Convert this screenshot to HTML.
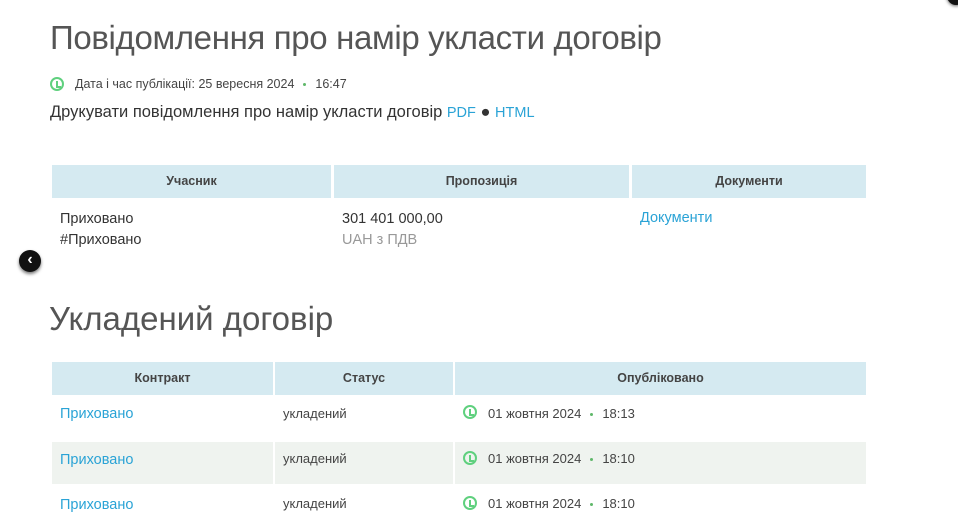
<!DOCTYPE html>
<html><head><meta charset="utf-8"><style>
*{margin:0;padding:0;box-sizing:border-box}
body{width:958px;height:522px;overflow:hidden;background:#fff;font-family:"Liberation Sans",sans-serif;color:#333;position:relative}
.a{position:absolute;white-space:nowrap}
h1{position:absolute;left:50px;top:19px;font-weight:300;font-size:33px;color:#555;letter-spacing:-0.35px;font-family:"Liberation Sans",sans-serif}
.lnk{color:#2aa3d6}
.hd{position:absolute;background:#d5eaf1;font-size:12.5px;font-weight:bold;color:#444;text-align:center;line-height:33px;font-family:"Liberation Sans Narrow","Liberation Sans",sans-serif}
.clock{display:inline-block;width:14px;height:14px;border:2px solid #5fd07e;border-radius:50%;position:absolute}
.clock:after{content:"";position:absolute;left:4px;top:1.5px;width:3px;height:5px;border-left:2px solid #5fd07e;border-bottom:2px solid #5fd07e}
.dot{display:inline-block;width:3px;height:3px;background:#5fb86a;border-radius:50%;vertical-align:middle;margin:0 9px}
.sm{font-family:"Liberation Sans Narrow","Liberation Sans",sans-serif;font-size:13px;color:#444}
</style></head><body>
<div class="a" style="left:947px;top:-13px;width:18px;height:18px;border-radius:50%;background:#111;box-shadow:0 1px 3px #666"></div>
<h1>Повідомлення про намір укласти договір</h1>
<span class="clock" style="left:50px;top:77px"></span>
<div class="a sm" style="left:75px;top:77px;font-size:12.5px">Дата і час публікації: 25 вересня 2024<span class="dot"></span>16:47</div>
<div class="a" style="left:50px;top:103px;font-size:16.5px;color:#333">Друкувати повідомлення про намір укласти договір <span class="lnk" style="font-size:14.5px">PDF</span> ● <span class="lnk" style="font-size:14.5px">HTML</span></div>

<div class="hd" style="left:52px;top:165px;width:279px">Учасник</div>
<div class="hd" style="left:334px;top:165px;width:295px">Пропозиція</div>
<div class="hd" style="left:632px;top:165px;width:234px">Документи</div>
<div class="a" style="left:60px;top:209px;font-size:14.5px;line-height:21px">Приховано<br>#Приховано</div>
<div class="a" style="left:342px;top:209px;font-size:14.5px;line-height:21px">301 401 000,00<br><span style="color:#999">UAH з ПДВ</span></div>
<div class="a lnk" style="left:640px;top:210px;font-size:14.5px">Документи</div>
<div class="a" style="left:19px;top:250px;width:22px;height:22px;border-radius:50%;background:#111;box-shadow:0 2px 3px #777;color:#fff;font-size:16px;font-weight:bold;text-align:center;line-height:20px">‹</div>

<div class="a" style="left:49px;top:300px;font-weight:300;font-size:33px;color:#555">Укладений договір</div>

<div class="hd" style="left:52px;top:362px;width:221px">Контракт</div>
<div class="hd" style="left:275px;top:362px;width:178px">Статус</div>
<div class="hd" style="left:455px;top:362px;width:411px">Опубліковано</div>
<div class="a" style="left:52px;top:442px;width:814px;height:42px;background:#eff3ef"></div>
<div class="a" style="left:273px;top:442px;width:2px;height:42px;background:#fff"></div>
<div class="a" style="left:453px;top:442px;width:2px;height:42px;background:#fff"></div>

<div class="a lnk" style="left:60px;top:406px;font-size:14.5px">Приховано</div>
<div class="a sm" style="left:283px;top:406px">укладений</div>
<span class="clock" style="left:463px;top:405px"></span>
<div class="a sm" style="left:488px;top:406px">01 жовтня 2024<span class="dot"></span>18:13</div>

<div class="a lnk" style="left:60px;top:452px;font-size:14.5px">Приховано</div>
<div class="a sm" style="left:283px;top:451px">укладений</div>
<span class="clock" style="left:463px;top:451px"></span>
<div class="a sm" style="left:488px;top:451px">01 жовтня 2024<span class="dot"></span>18:10</div>

<div class="a lnk" style="left:60px;top:497px;font-size:14.5px">Приховано</div>
<div class="a sm" style="left:283px;top:496px">укладений</div>
<span class="clock" style="left:463px;top:496px"></span>
<div class="a sm" style="left:488px;top:496px">01 жовтня 2024<span class="dot"></span>18:10</div>
</body></html>
